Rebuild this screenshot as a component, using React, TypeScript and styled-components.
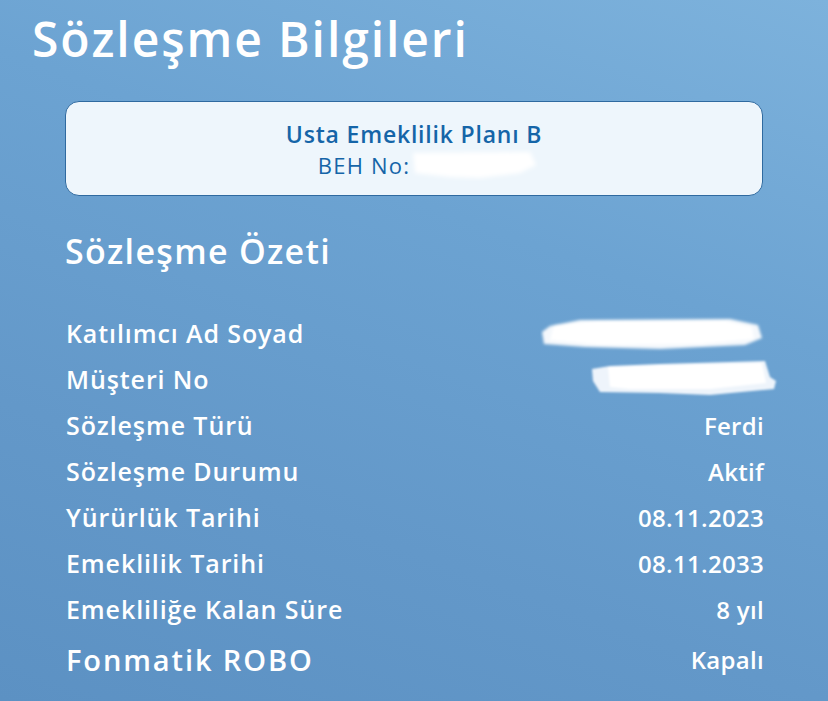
import React from "react";
import styled, { createGlobalStyle } from "styled-components";

const Global = createGlobalStyle`
  html, body { margin: 0; padding: 0; }
  body {
    width: 828px;
    height: 701px;
    overflow: hidden;
    font-family: "Open Sans", "Noto Sans", sans-serif;
  }
`;

const Page = styled.div`
  width: 828px;
  height: 701px;
  box-sizing: border-box;
  background: linear-gradient(200deg, #7db2dc 0%, #6ca3d2 35%, #6398c9 70%, #5c91c3 100%);
  padding: 9px 65px 0 65px;
  display: flex;
  flex-direction: column;
  color: #ffffff;
`;

const Title = styled.h1`
  margin: 0 0 0 -33px;
  font-size: 48px;
  font-weight: 600;
  line-height: 60px;
  letter-spacing: 1.9px;
`;

const Card = styled.div`
  margin-top: 32px;
  height: 95px;
  box-sizing: border-box;
  border: 1px solid #2f6aa0;
  border-radius: 14px;
  background: #eef6fc;
  display: flex;
  flex-direction: column;
  align-items: center;
  justify-content: center;
  color: #1565a8;
  padding-top: 2px;
`;

const PlanName = styled.div`
  font-size: 23px;
  font-weight: 600;
  line-height: 30px;
  letter-spacing: 0.8px;
`;

const BehRow = styled.div`
  display: flex;
  align-items: center;
  font-size: 22px;
  font-weight: 400;
  line-height: 30px;
  letter-spacing: 1.2px;
  margin-left: 28px;
`;

const Smudge = styled.svg`
  display: block;
  flex: none;
`;

const SectionTitle = styled.h2`
  margin: 35px 0 0 0;
  font-size: 34px;
  font-weight: 600;
  line-height: 40px;
  letter-spacing: 1.3px;
`;

const List = styled.div`
  margin-top: 39px;
  display: flex;
  flex-direction: column;
`;

const Row = styled.div`
  display: flex;
  justify-content: space-between;
  align-items: center;
  height: 46px;
  padding-left: 1px;

  &:last-child {
    height: 54px;
  }
`;

const Label = styled.span<{ $big?: boolean }>`
  font-size: ${(p) => (p.$big ? 29 : 25)}px;
  font-weight: 600;
  letter-spacing: ${(p) => (p.$big ? 1.9 : 0.9)}px;
`;

const Value = styled.span`
  font-size: 24px;
  font-weight: 600;
  letter-spacing: 0.3px;
  margin-right: -1px;
  display: flex;
  align-items: center;
`;

const BlotA = () => (
  <Smudge width="226" height="42" viewBox="0 0 226 42" style={{ marginRight: -2 }}>
    <defs>
      <filter id="bA" x="-5%" y="-20%" width="110%" height="140%">
        <feGaussianBlur stdDeviation="1.4" />
      </filter>
    </defs>
    <g filter="url(#bA)" fill="#ffffff">
      <path d="M10 14 L40 8 L190 7 L218 13 L222 26 L205 33 L120 37 L45 35 L4 32 L2 20 Z" fill="#f4f8fc" />
      <path d="M14 13 L60 9 L185 9 L212 15 L214 27 L160 32 L60 33 L10 28 Z" />
    </g>
  </Smudge>
);

const BlotB = () => (
  <Smudge width="190" height="40" viewBox="0 0 190 40" style={{ marginRight: -16 }}>
    <defs>
      <filter id="bB" x="-5%" y="-20%" width="110%" height="140%">
        <feGaussianBlur stdDeviation="1.3" />
      </filter>
    </defs>
    <g filter="url(#bB)">
      <path d="M2 10 L20 7 L70 5 L175 2 L180 18 L186 22 L184 30 L120 36 L70 34 L10 33 L3 22 Z" fill="#eef4fb" />
      <path d="M18 8 L70 6 L172 4 L176 24 L120 30 L40 30 L20 28 Z" fill="#ffffff" />
    </g>
  </Smudge>
);

const BlotBeh = () => (
  <Smudge width="128" height="32" viewBox="0 0 128 32">
    <defs>
      <filter id="bC" x="-5%" y="-20%" width="110%" height="140%">
        <feGaussianBlur stdDeviation="2" />
      </filter>
    </defs>
    <path filter="url(#bC)" d="M3 4 L120 3 L126 16 L110 24 L70 29 L40 28 L5 24 Z" fill="#ffffff" />
  </Smudge>
);

const rows: { label: string; value: React.ReactNode; big?: boolean }[] = [
  { label: "Katılımcı Ad Soyad", value: <BlotA /> },
  { label: "Müşteri No", value: <BlotB /> },
  { label: "Sözleşme Türü", value: "Ferdi" },
  { label: "Sözleşme Durumu", value: "Aktif" },
  { label: "Yürürlük Tarihi", value: "08.11.2023" },
  { label: "Emeklilik Tarihi", value: "08.11.2033" },
  { label: "Emekliliğe Kalan Süre", value: "8 yıl" },
  { label: "Fonmatik ROBO", value: "Kapalı", big: true },
];

export default function App() {
  return (
    <>
      <Global />
      <Page>
        <Title>Sözleşme Bilgileri</Title>
        <Card>
          <PlanName>Usta Emeklilik Planı B</PlanName>
          <BehRow>
            BEH No:
            <BlotBeh />
          </BehRow>
        </Card>
        <SectionTitle>Sözleşme Özeti</SectionTitle>
        <List>
          {rows.map((r) => (
            <Row key={r.label}>
              <Label $big={r.big}>{r.label}</Label>
              <Value>{r.value}</Value>
            </Row>
          ))}
        </List>
      </Page>
    </>
  );
}
